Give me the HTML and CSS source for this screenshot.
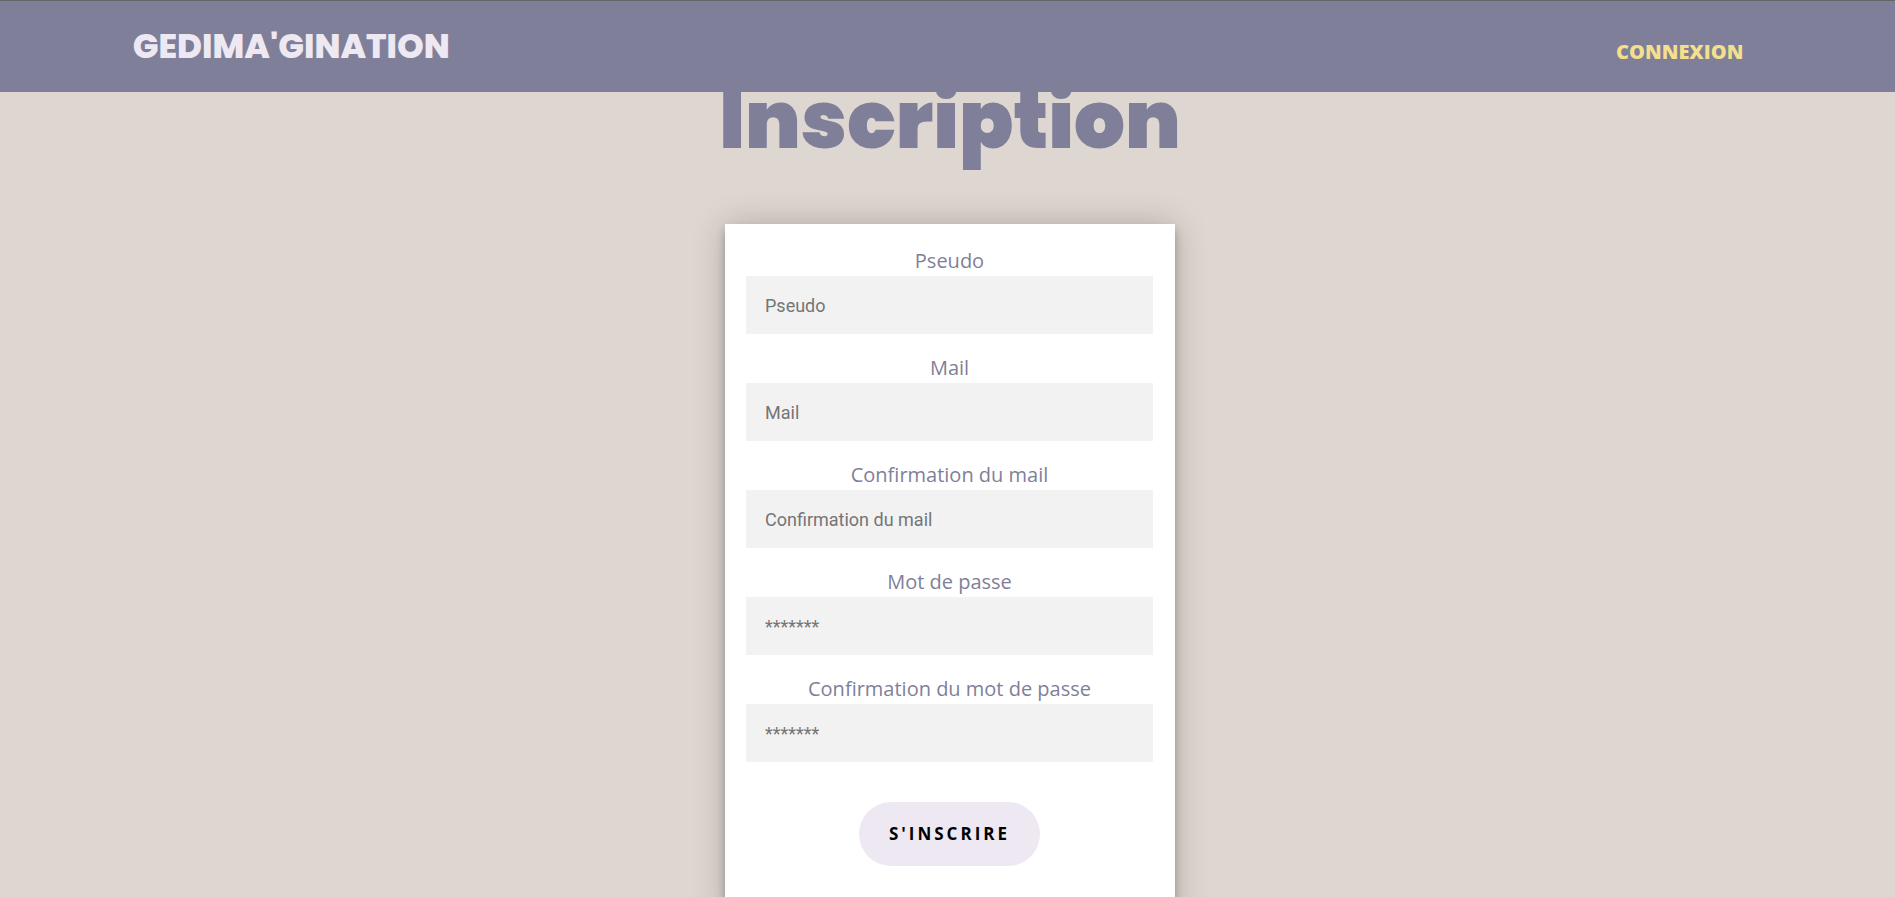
FILE: index.html
```
<!DOCTYPE html>
<html lang="fr">
<head>
<meta charset="utf-8">
<meta name="viewport" content="width=device-width, initial-scale=1">
<title>Inscription</title>
<link rel="stylesheet" href="styles.css">
</head>
<body>
<header class="navbar">
  <a class="brand" href="#">GEDIMA'GINATION</a>
  <nav><a class="nav-link" href="#">CONNEXION</a></nav>
</header>
<main class="page">
  <h1 class="title">Inscription</h1>
  <form class="card">
    <div class="field">
      <label for="pseudo">Pseudo</label>
      <input id="pseudo" type="text" placeholder="Pseudo">
    </div>
    <div class="field">
      <label for="mail">Mail</label>
      <input id="mail" type="email" placeholder="Mail">
    </div>
    <div class="field">
      <label for="mail2">Confirmation du mail</label>
      <input id="mail2" type="email" placeholder="Confirmation du mail">
    </div>
    <div class="field">
      <label for="pass">Mot de passe</label>
      <input id="pass" type="password" placeholder="*******">
    </div>
    <div class="field">
      <label for="pass2">Confirmation du mot de passe</label>
      <input id="pass2" type="password" placeholder="*******">
    </div>
    <button class="submit" type="submit">S'INSCRIRE</button>
  </form>
</main>
</body>
</html>
```
FILE: styles.css
```
* {
  box-sizing: border-box;
}

body {
  margin: 0;
  height: 100vh;
  overflow: hidden;
  background: #ded6d0;
  color: #7f7f9a;
  font-family: "Open Sans", sans-serif;
}

.navbar {
  position: fixed;
  top: 0;
  left: 0;
  right: 0;
  z-index: 1;
  height: 92px;
  display: flex;
  justify-content: space-between;
  align-items: center;
  padding: 0 8% 2px 7%;
  border-top: 1px solid #666;
  background: #7f7f9a;
}

.navbar a {
  text-decoration: none;
}

.brand {
  color: #eee8f3;
  font: 800 34px/46px Poppins, Inter, sans-serif;
}

.nav-link {
  display: block;
  padding-top: 12px;
  color: #f3df8c;
  font-size: 20px;
  font-weight: 800;
  line-height: 28px;
}

.page {
  display: flex;
  flex-direction: column;
  align-items: center;
  padding: 64px 0 0 5px;
}

.title {
  margin: 0 0 48px;
  font: 900 80px/112px Poppins, Inter, sans-serif;
}

.card {
  width: 100%;
  max-width: 450px;
  display: flex;
  flex-direction: column;
  gap: 22px;
  padding: 25px 22px 60px 21px;
  background: #fff;
  box-shadow: 0 0 32px rgba(0, 0, 0, 0.2), 0 6px 8px rgba(0, 0, 0, 0.24);
}

.field {
  display: flex;
  flex-direction: column;
}

.field label {
  padding-bottom: 4px;
  font-size: 20px;
  line-height: 23px;
  text-align: center;
}

.field input {
  width: 100%;
  height: 58px;
  padding: 0 19px;
  border: 0;
  border-radius: 0;
  outline: 0;
  background: #f2f2f2;
  color: #333;
  font: 18px Roboto, sans-serif;
}

.field input::placeholder {
  color: #757575;
}

.submit {
  align-self: center;
  margin-top: 18px;
  padding: 20px 30px;
  border: 0;
  border-radius: 32px;
  background: #eee8f3;
  color: #000;
  font: 700 17px/24px "Open Sans", sans-serif;
  letter-spacing: 3px;
}
```
